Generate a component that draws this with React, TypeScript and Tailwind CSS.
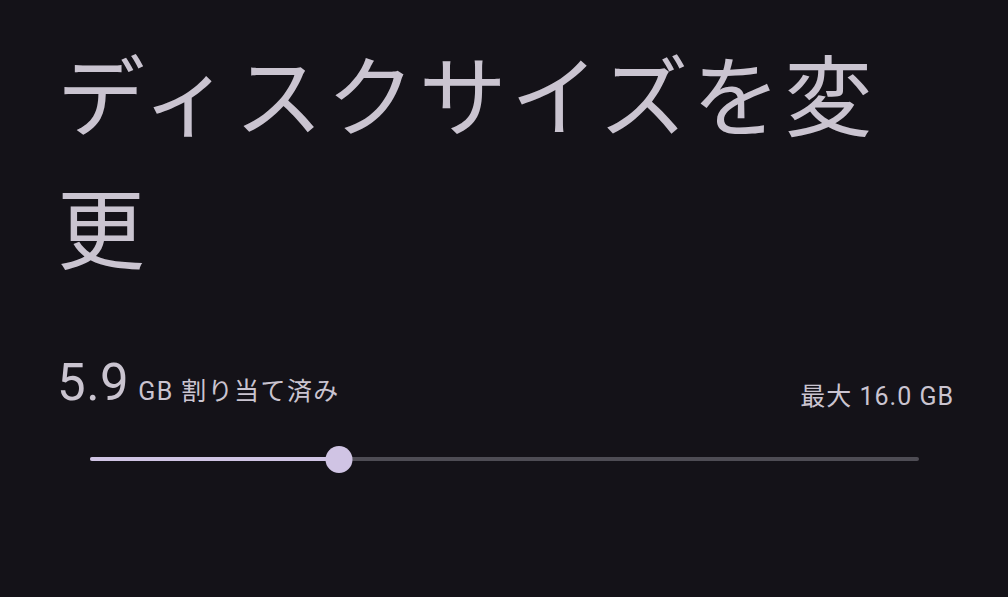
import React from 'react';

const jp = { fontFamily: 'Roboto, "Noto Sans CJK JP", sans-serif' };

export default function App() {
  // slider position as shown (5.9 GB on a range whose thumb sits at ~30%)
  const pct = 30;

  return (
    <div className="w-[1008px] h-[597px] bg-[#141218] text-[#cac4d0] overflow-hidden" style={jp}>
      <div className="w-[895px] ml-[57px] pt-[32px]">
        <h1 className="text-[88px] leading-[133px] font-normal tracking-[4px]">ディスクサイズを変更</h1>

        <div className="mt-[59px] flex items-end justify-between">
          <div className="flex items-baseline gap-[9px]">
            <span className="text-[51px] leading-none tracking-[0.5px]">5.9</span>
            <span className="text-[25px] leading-none tracking-[1.4px]">GB 割り当て済み</span>
          </div>
          <span className="text-[25px] leading-none tracking-[1px] mb-[-1px] mr-[-2px]">最大 16.0 GB</span>
        </div>

        <div className="mx-[33px] mt-[37px] relative h-[28px] flex items-center">
          <div className="h-[4px] w-full bg-[#4e4c54] rounded-full" />
          <div className="absolute left-0 h-[4px] bg-[#d0c4e4] rounded-full" style={{ width: `${pct}%` }} />
          <div
            className="absolute w-[27px] h-[27px] rounded-full bg-[#d0c4e4] -translate-x-1/2"
            style={{ left: `${pct}%` }}
          />
        </div>
      </div>
    </div>
  );
}
